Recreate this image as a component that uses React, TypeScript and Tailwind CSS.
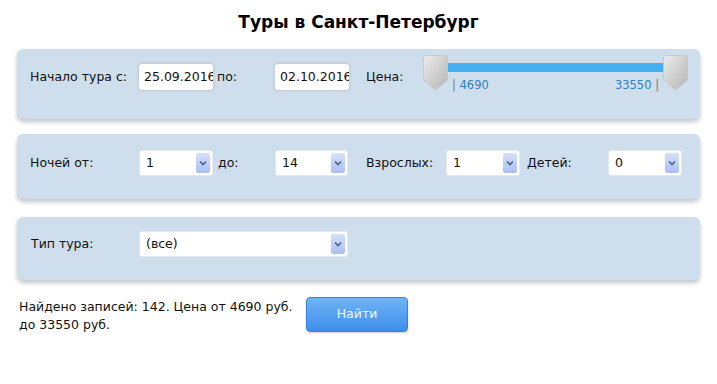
import React from "react";

const font = { fontFamily: '"DejaVu Sans", Verdana, sans-serif' };

function Select({ value, w }: { value: string; w: string }) {
  return (
    <div className={`relative h-[26px] ${w} bg-white rounded-[3px] border border-[#e3e9f0] flex items-center pl-[6px] text-[12.5px] text-[#111]`}>
      <span>{value}</span>
      <div className="absolute right-[2px] top-[2px] bottom-[2px] w-[14px] rounded-[2px] bg-gradient-to-b from-[#d6e2fb] to-[#a9bff1] flex items-center justify-center">
        <svg width="8" height="6" viewBox="0 0 8 6">
          <path d="M1 1.5 L4 4.5 L7 1.5" stroke="#4d6185" strokeWidth="1.6" fill="none" />
        </svg>
      </div>
    </div>
  );
}

function DateInput({ value }: { value: string }) {
  return (
    <div className="h-[26px] w-[74px] bg-white rounded-[3px] shadow-[0_0_3px_1px_rgba(190,200,210,0.9)] flex items-center pl-[5px] overflow-hidden whitespace-nowrap text-[12.5px] text-[#111]">
      {value}
    </div>
  );
}

function Handle() {
  return (
    <svg width="25" height="36" viewBox="0 0 25 36">
      <defs>
        <linearGradient id="hg" x1="0" y1="0" x2="1" y2="1">
          <stop offset="0" stopColor="#ececec" />
          <stop offset="1" stopColor="#b4b4b4" />
        </linearGradient>
      </defs>
      <path d="M0.5 3 Q0.5 0.5 3 0.5 L22 0.5 Q24.5 0.5 24.5 3 L24.5 25 L12.5 35 L0.5 25 Z" fill="url(#hg)" stroke="#c4c4c4" strokeWidth="0.8" />
    </svg>
  );
}

function Panel({ children, h, pt }: { children: React.ReactNode; h: string; pt: string }) {
  return (
    <div className={`mx-[17px] ${h} ${pt} pl-[13px] rounded-[6px] bg-[#cfdeec] shadow-[0_3px_4px_rgba(120,130,140,0.45)] flex items-start text-[12.5px] text-[#111]`}>
      {children}
    </div>
  );
}

export default function App() {
  return (
    <div className="w-[717px] h-[384px] bg-white" style={font}>
      <div className="h-[49px] flex items-center justify-center pb-[4px]">
        <h1 className="text-[17px] font-bold text-black">Туры в Санкт-Петербург</h1>
      </div>

      <Panel h="h-[70px]" pt="pt-[15px]">
        <div className="w-[109px] h-[26px] flex items-center">Начало тура с:</div>
        <DateInput value="25.09.2016" />
        <div className="w-[62px] h-[26px] flex items-center pl-[4px]">по:</div>
        <DateInput value="02.10.2016" />
        <div className="w-[74px] h-[26px] flex items-center pl-[17px]">Цена:</div>
        <div className="relative w-[265px] h-[36px] -mt-[9px] flex items-start">
          <Handle />
          <div className="flex-1 relative">
            <div className="mt-[8px] h-[9px] bg-[#45b0f1]" />
            <div className="flex justify-between text-[11.5px] text-[#2f7fc4] mt-[5px] px-[4px]">
              <span><span className="text-[#777]">|</span> 4690</span>
              <span>33550 <span className="text-[#777]">|</span></span>
            </div>
          </div>
          <Handle />
        </div>
      </Panel>

      <div className="h-[15px]" />

      <Panel h="h-[65px]" pt="pt-[16px]">
        <div className="w-[109px] h-[26px] flex items-center">Ночей от:</div>
        <Select value="1" w="w-[74px]" />
        <div className="w-[62px] h-[26px] flex items-center pl-[5px]">до:</div>
        <Select value="14" w="w-[73px]" />
        <div className="w-[98px] h-[26px] flex items-center pl-[18px]">Взрослых:</div>
        <Select value="1" w="w-[74px]" />
        <div className="w-[88px] h-[26px] flex items-center pl-[7px]">Детей:</div>
        <Select value="0" w="w-[74px]" />
      </Panel>

      <div className="h-[18px]" />

      <Panel h="h-[63px]" pt="pt-[14px]">
        <div className="w-[109px] h-[26px] flex items-center pl-[1px]">Тип тура:</div>
        <Select value="(все)" w="w-[209px]" />
      </Panel>

      <div className="flex mt-[17px] pl-[19px]">
        <div className="w-[282px] pt-[1px] text-[12.5px] leading-[18px] text-[#111]">
          Найдено записей: 142. Цена от 4690 руб. до 33550 руб.
        </div>
        <button className="ml-[5px] w-[102px] h-[35px] rounded-[4px] border border-[#3a80d6] bg-gradient-to-b from-[#6fb4f7] to-[#3f8deb] text-[#f4f8ff] text-[12.5px] shadow-[0_1px_2px_rgba(0,0,0,0.2)]">
          Найти
        </button>
      </div>
    </div>
  );
}
